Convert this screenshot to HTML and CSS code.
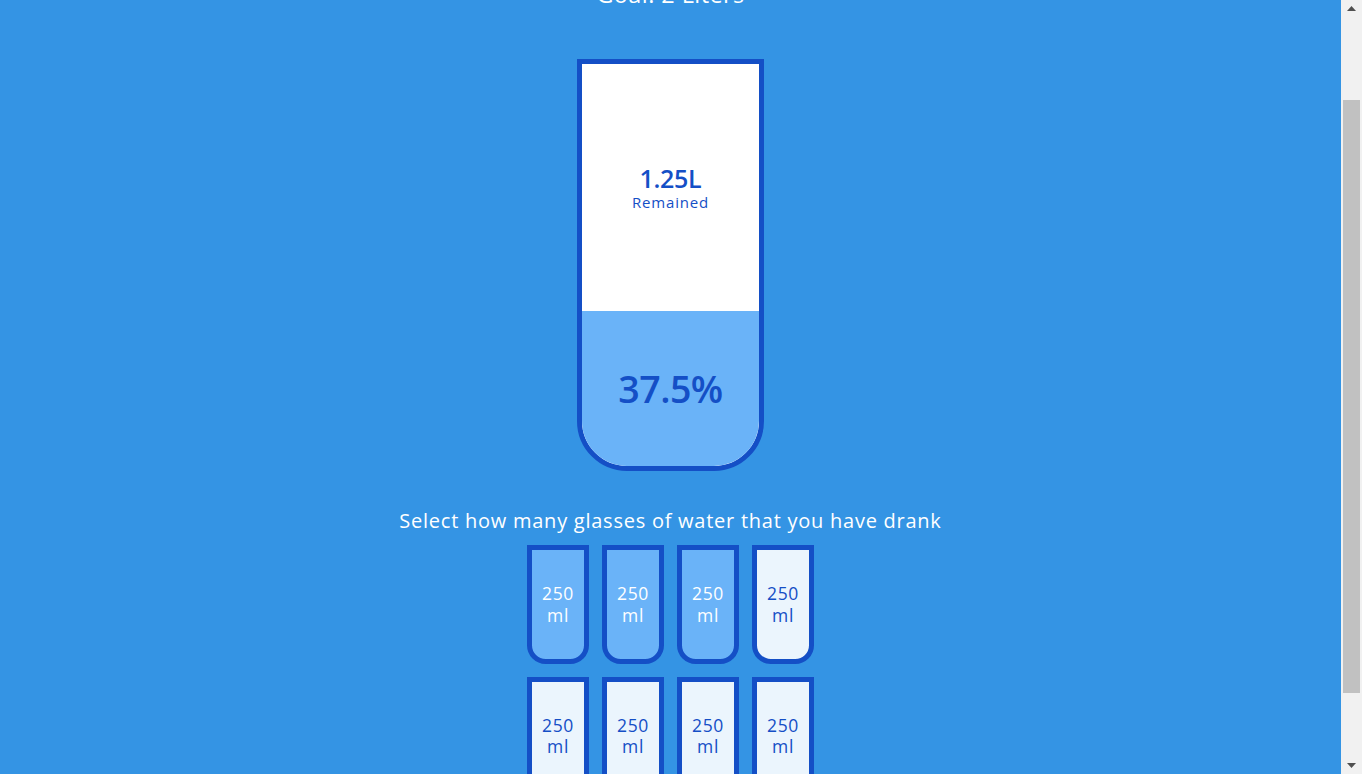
FILE: index.html
```html
<!DOCTYPE html>
<html lang="en">
<head>
<meta charset="utf-8">
<title>Drink Water</title>
<link rel="stylesheet" href="styles.css">
</head>
<body>
<h1 class="title">Drink Water</h1>
<h3 class="goal">Goal: 2 Liters</h3>
<div class="cup">
  <div class="remained">
    <span class="liters">1.25L</span>
    <small class="remained-label">Remained</small>
  </div>
  <div class="percentage" style="height:154.7px">37.5%</div>
</div>
<p class="text">Select how many glasses of water that you have drank</p>
<div class="cups">
  <div class="cup-small full"><span class="cup-label">250 ml</span></div>
  <div class="cup-small full"><span class="cup-label">250 ml</span></div>
  <div class="cup-small full"><span class="cup-label">250 ml</span></div>
  <div class="cup-small"><span class="cup-label">250 ml</span></div>
  <div class="cup-small"><span class="cup-label">250 ml</span></div>
  <div class="cup-small"><span class="cup-label">250 ml</span></div>
  <div class="cup-small"><span class="cup-label">250 ml</span></div>
  <div class="cup-small"><span class="cup-label">250 ml</span></div>
</div>
<div class="scrollbar" aria-hidden="true">
  <div class="sb-button">
    <svg width="9" height="5" viewBox="0 0 9 5"><polygon points="0,5 4.5,0 9,5" fill="#505050"/></svg>
  </div>
  <div class="sb-track">
    <div class="sb-thumb"></div>
  </div>
  <div class="sb-button">
    <svg width="9" height="5" viewBox="0 0 9 5"><polygon points="0,0 9,0 4.5,5" fill="#505050"/></svg>
  </div>
</div>
<script src="script.js"></script>
</body>
</html>
```

FILE: styles.css
```css
* {
  box-sizing: border-box;
}

body {
  margin: 10px 31px 50px 10px;
  background-color: #3494e4;
  color: #fff;
  font-family: "Open Sans", "DejaVu Sans", sans-serif;
  display: flex;
  flex-direction: column;
  align-items: center;
}

.title {
  margin: 12.5px 0 0;
  font-size: 40px;
  line-height: 49px;
  font-weight: 600;
}

.goal {
  margin: 12.5px 0;
  font-size: 23.4px;
  line-height: 28.5px;
  font-weight: 400;
  letter-spacing: 0.45px;
}

.cup {
  width: 187.5px;
  height: 412.5px;
  margin: 37.5px 0;
  background-color: #fff;
  border: 5px solid #144fc6;
  border-radius: 0 0 50px 50px;
  color: #144fc6;
  display: flex;
  flex-direction: column;
  overflow: hidden;
}

.remained {
  flex: 1;
  display: flex;
  flex-direction: column;
  align-items: center;
  justify-content: center;
  text-align: center;
}

.liters {
  font-size: 25px;
  line-height: 30px;
  font-weight: 600;
  letter-spacing: -0.3px;
}

.remained-label {
  font-size: 15px;
  line-height: 18px;
  letter-spacing: 0.8px;
}

.percentage {
  background-color: #6ab3f8;
  display: flex;
  align-items: center;
  justify-content: center;
  font-size: 37.5px;
  font-weight: 600;
  letter-spacing: -0.5px;
}

.text {
  margin: 0 0 6.25px;
  font-size: 20px;
  line-height: 24.4px;
  text-align: center;
  letter-spacing: 0.75px;
}

.cups {
  width: 350px;
  display: flex;
  flex-wrap: wrap;
  justify-content: center;
  align-items: center;
}

.cup-small {
  width: 62.5px;
  height: 118.75px;
  margin: 6.25px;
  border: 5px solid #144fc6;
  border-radius: 0 0 18.75px 18.75px;
  background-color: rgba(255, 255, 255, 0.9);
  color: #144fc6;
  font-size: 17.5px;
  line-height: 21.3px;
  letter-spacing: 0.6px;
  display: flex;
  align-items: center;
  justify-content: center;
  text-align: center;
}

.cup-small.full {
  background-color: #6ab3f8;
  color: #fff;
}

.cup-label {
  width: min-content;
}

/* classic browser scrollbar drawn over the right edge */
.scrollbar {
  position: fixed;
  top: 0;
  right: 0;
  width: 21px;
  height: 100vh;
  background-color: #f1f1f1;
  display: flex;
  flex-direction: column;
}

.sb-button {
  height: 17px;
  flex: none;
  display: flex;
  align-items: center;
  justify-content: center;
}

.sb-button svg {
  display: block;
}

.sb-track {
  flex: 1;
  padding: 83px 2px 0;
}

.sb-thumb {
  height: 593px;
  background-color: #c1c1c1;
}
```

FILE: script.js
```js
window.scrollTo(0, 103.5);
```
